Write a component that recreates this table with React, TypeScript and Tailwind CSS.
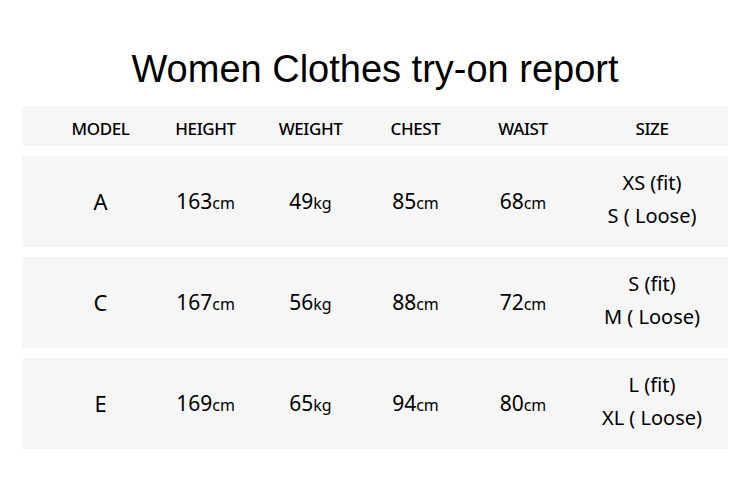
const rows = [
  { model: "A", height: "163", weight: "49", chest: "85", waist: "68", fit: "XS (fit)", loose: "S ( Loose)" },
  { model: "C", height: "167", weight: "56", chest: "88", waist: "72", fit: "S (fit)", loose: "M ( Loose)" },
  { model: "E", height: "169", weight: "65", chest: "94", waist: "80", fit: "L (fit)", loose: "XL ( Loose)" },
]

const headers = ["MODEL", "HEIGHT", "WEIGHT", "CHEST", "WAIST", "SIZE"]

const cols = "grid grid-cols-[105px_105px_105px_105px_110px_148px] pl-[26px]"

function Value({ n, unit }: { n: string; unit: string }) {
  return (
    <span className="text-[21px]">
      {n}
      <span className="text-[16px]">{unit}</span>
    </span>
  )
}

export default function App() {
  return (
    <div className="w-[750px] h-[493px] bg-white text-black font-['Noto_Sans',sans-serif] pt-[50px]">
      <h1 className="text-center text-[38px] leading-[38px] font-['Liberation_Sans',Arial,sans-serif]">
        Women Clothes try-on report
      </h1>

      <div className="mt-[18px] mx-[22px] flex flex-col gap-[10px]">
        <div className={`${cols} h-[40px] items-center bg-[#f6f6f6] pt-[6px]`}>
          {headers.map((h) => (
            <div key={h} className="text-center text-[17px] font-medium tracking-[-0.4px]">
              {h}
            </div>
          ))}
        </div>

        {rows.map((r) => (
          <div key={r.model} className={`${cols} h-[91px] items-center bg-[#f6f6f6]`}>
            <div className="text-center text-[22px]">{r.model}</div>
            <div className="text-center">
              <Value n={r.height} unit="cm" />
            </div>
            <div className="text-center">
              <Value n={r.weight} unit="kg" />
            </div>
            <div className="text-center">
              <Value n={r.chest} unit="cm" />
            </div>
            <div className="text-center">
              <Value n={r.waist} unit="cm" />
            </div>
            <div className="text-center text-[20px] leading-[33px] pb-[5px]">
              <div>{r.fit}</div>
              <div>{r.loose}</div>
            </div>
          </div>
        ))}
      </div>
    </div>
  )
}
